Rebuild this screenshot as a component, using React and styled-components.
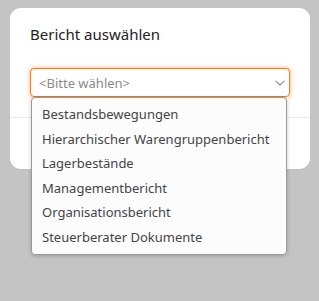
import React from "react";
import styled, { createGlobalStyle } from "styled-components";

const Global = createGlobalStyle`
  html, body { margin: 0; padding: 0; background: #c4c4c4; }
  body { font-family: "Noto Sans", "Open Sans", sans-serif; }
  * { box-sizing: border-box; }
`;

const Page = styled.div`
  width: 319px;
  height: 301px;
  padding: 8px 9px 0 10px;
`;

const Card = styled.div`
  position: relative;
  width: 300px;
  height: 161px;
  background: #fff;
  border-radius: 11px;
  display: flex;
  flex-direction: column;
`;

const Header = styled.div`
  padding: 16px 20px 0 20px;
  height: 110px;
  border-bottom: 1px solid #e8e8e8;
  display: flex;
  flex-direction: column;
`;

const Title = styled.h2`
  margin: 0;
  font-size: 15px;
  font-weight: 400;
  line-height: 20px;
  color: #222;
`;

const SelectWrap = styled.div`
  position: relative;
  margin-top: 24px;
`;

const SelectBox = styled.div`
  height: 29px;
  border: 1px solid #f07c1e;
  border-radius: 4px;
  box-shadow: 0 0 5px rgba(245, 125, 30, 0.6);
  background: #fff;
  display: flex;
  align-items: center;
  justify-content: space-between;
  padding: 0 4px 0 8px;
  font-size: 13px;
  color: #8a8a8a;
`;

const Chevron = styled.svg`
  margin-top: 1px;
`;

const Menu = styled.ul`
  position: absolute;
  top: 29px;
  left: 1px;
  width: 256px;
  margin: 0;
  padding: 4px 0;
  list-style: none;
  background: #fcfcfc;
  border: 1px solid #9a9a9a;
  border-radius: 4px;
  box-shadow: 0 1px 4px rgba(0, 0, 0, 0.2);
  z-index: 2;
`;

const Item = styled.li`
  height: 24.6px;
  line-height: 24.6px;
  padding-left: 10px;
  font-size: 13px;
  color: #444;
  white-space: nowrap;
`;

const Footer = styled.div`
  flex: 1;
`;

const items = [
  "Bestandsbewegungen",
  "Hierarchischer Warengruppenbericht",
  "Lagerbestände",
  "Managementbericht",
  "Organisationsbericht",
  "Steuerberater Dokumente",
];

export default function App() {
  return (
    <>
      <Global />
      <Page>
        <Card>
          <Header>
            <Title>Bericht auswählen</Title>
            <SelectWrap>
              <SelectBox>
                <span>&lt;Bitte wählen&gt;</span>
                <Chevron width="10" height="6" viewBox="0 0 10 6">
                  <path d="M0.5 0.8 L5 5 L9.5 0.8" fill="none" stroke="#8a8a8a" strokeWidth="1.1" />
                </Chevron>
              </SelectBox>
              <Menu>
                {items.map((t) => (
                  <Item key={t}>{t}</Item>
                ))}
              </Menu>
            </SelectWrap>
          </Header>
          <Footer />
        </Card>
      </Page>
    </>
  );
}
